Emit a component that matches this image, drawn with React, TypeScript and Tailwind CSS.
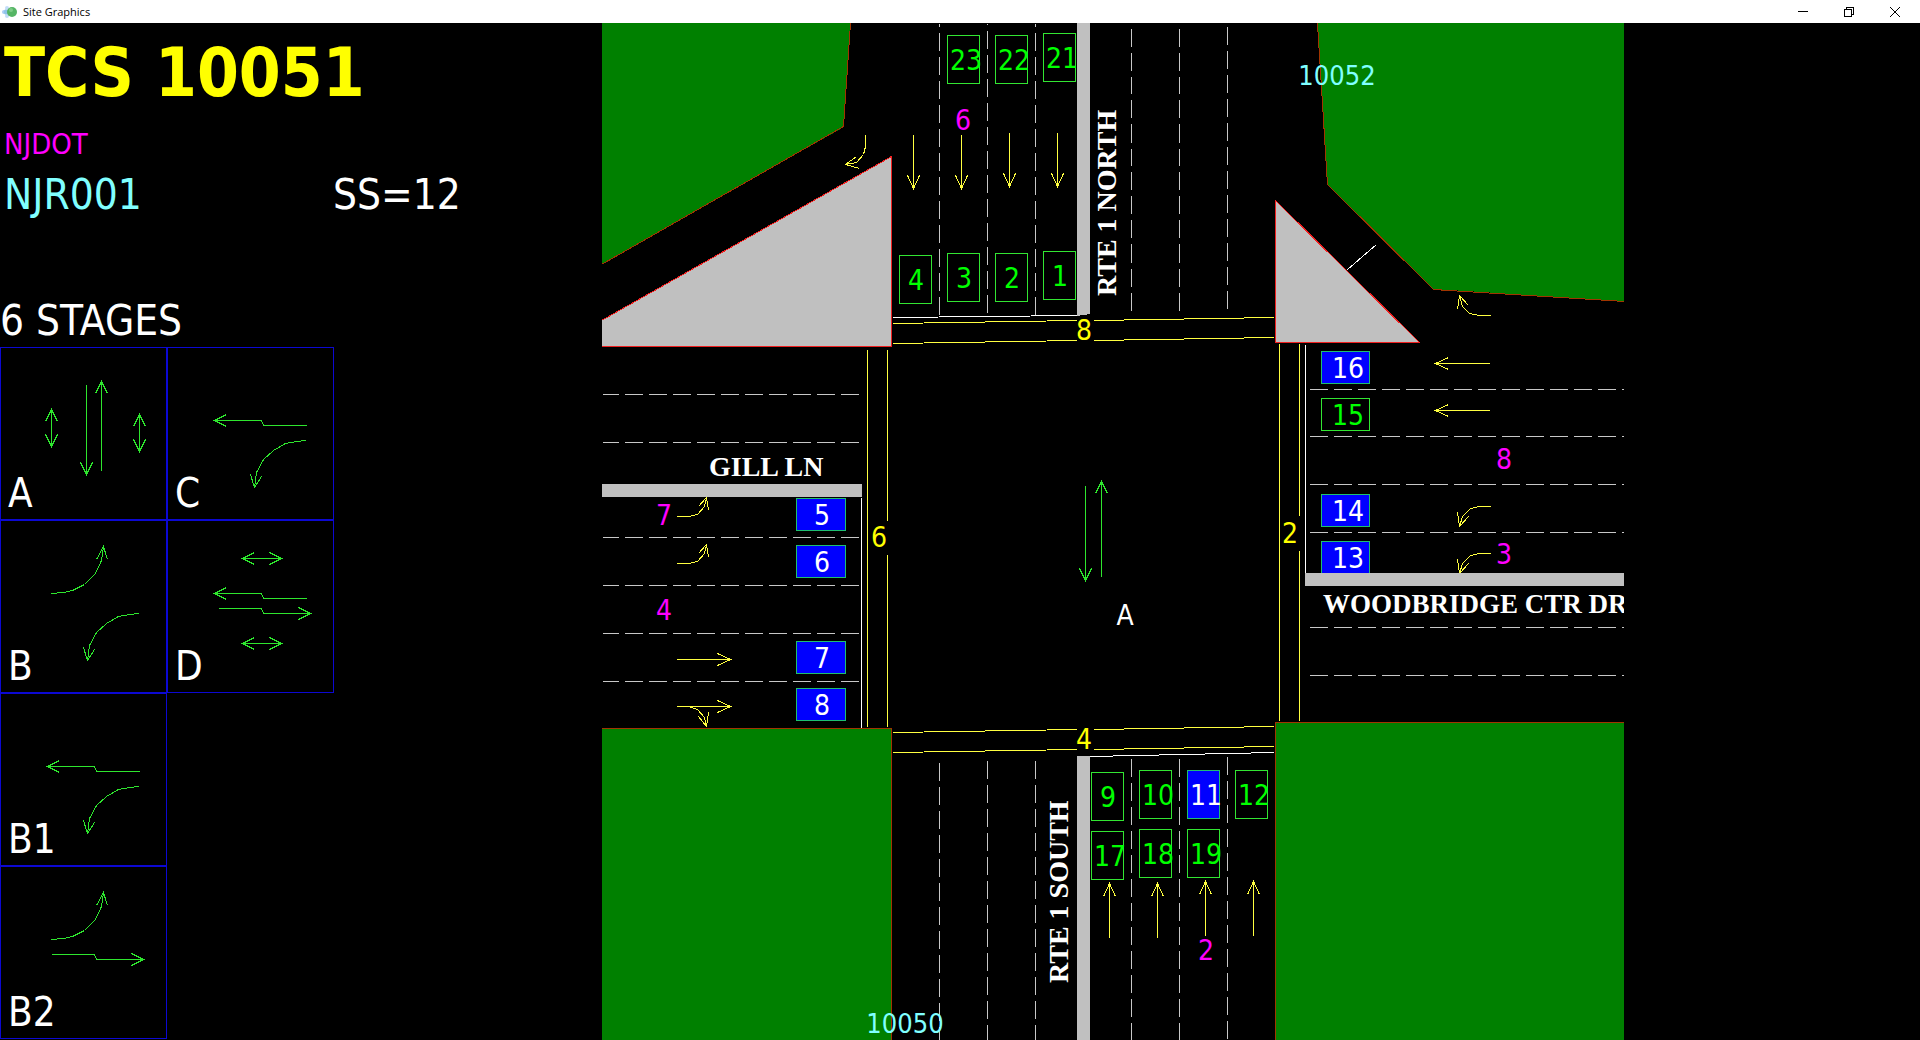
import React from "react";

type Point = [number, number];

const MAP_FONT = "font-['DejaVu_Sans_Condensed','DejaVu_Sans',sans-serif]";

/* Centres one-pixel strokes on the pixel grid. */
const PIXEL_CENTRE = "translate(0.5 0.5)";

const toPoints = (points: Point[]) => points.map((p) => p.join(",")).join(" ");

/* ---------- Arrows ---------- */

type Direction = "up" | "down" | "left" | "right";

function headPoints(x: number, y: number, dir: Direction, len: number): string {
  const w = 6;
  switch (dir) {
    case "up":
      return toPoints([[x - w, y + len], [x, y], [x + w, y + len]]);
    case "down":
      return toPoints([[x - w, y - len], [x, y], [x + w, y - len]]);
    case "left":
      return toPoints([[x + len, y - w], [x, y], [x + len, y + w]]);
    default:
      return toPoints([[x - len, y - w], [x, y], [x - len, y + w]]);
  }
}

function Arrow({ from, to, dir, len = 13 }: { from: Point; to: Point; dir: Direction; len?: number }) {
  return (
    <g>
      <polyline points={toPoints([from, to])} />
      <polyline points={headPoints(to[0], to[1], dir, len)} />
    </g>
  );
}

function DoubleArrow({ from, to, vertical }: { from: Point; to: Point; vertical?: boolean }) {
  return (
    <g>
      <polyline points={toPoints([from, to])} />
      <polyline points={headPoints(from[0], from[1], vertical ? "up" : "left", 12)} />
      <polyline points={headPoints(to[0], to[1], vertical ? "down" : "right", 12)} />
    </g>
  );
}

/* ---------- Stage movements ---------- */

const LeftThrough = () => (
  <g>
    <polyline points="139,78 96,78 94,73 47,73" />
    <polyline points="59,67 47,73 59,79" />
  </g>
);

const RightThrough = () => (
  <g>
    <polyline points="51,88 94,88 96,93 143,93" />
    <polyline points="131,87 143,93 131,99" />
  </g>
);

const LeftTurnDown = () => (
  <g>
    <polyline points="139,93 129,94 118,96 106,103 96,112 89,125 87,140" />
    <polyline points="83,127 87,140 94,129" />
  </g>
);

const RightTurnUp = () => (
  <g>
    <polyline points="51,73 63,72 72,70 84,64 95,53 101,40 103,26" />
    <polyline points="96,39 103,26 107,39" />
  </g>
);

const STAGES: { name: string; column: string; moves: React.ReactNode }[] = [
  {
    name: "A",
    column: "col-start-1",
    moves: (
      <>
        <DoubleArrow from={[51, 62]} to={[51, 99]} vertical />
        <Arrow from={[86, 37]} to={[86, 127]} dir="down" len={12} />
        <Arrow from={[101, 123]} to={[101, 34]} dir="up" len={12} />
        <DoubleArrow from={[139, 67]} to={[139, 104]} vertical />
      </>
    ),
  },
  { name: "C", column: "col-start-2", moves: <><LeftThrough /><LeftTurnDown /></> },
  { name: "B", column: "col-start-1", moves: <><RightTurnUp /><LeftTurnDown /></> },
  {
    name: "D",
    column: "col-start-2",
    moves: (
      <>
        <DoubleArrow from={[75, 38]} to={[114, 38]} />
        <LeftThrough />
        <RightThrough />
        <DoubleArrow from={[75, 123]} to={[114, 123]} />
      </>
    ),
  },
  { name: "B1", column: "col-start-1", moves: <><LeftThrough /><LeftTurnDown /></> },
  { name: "B2", column: "col-start-1", moves: <><RightTurnUp /><RightThrough /></> },
];

function StageGrid() {
  return (
    <ul className="grid w-max grid-cols-[167px_167px]">
      {STAGES.map((s) => (
        <li key={s.name} className={`relative h-[173px] border border-[#0c08d2] ${s.column}`}>
          <svg viewBox="1 1 165 171" className="size-full fill-none stroke-[#2ee62e]" shapeRendering="crispEdges" aria-hidden="true">
            <g transform={PIXEL_CENTRE}>{s.moves}</g>
          </svg>
          <span className="absolute bottom-[2px] left-[7px] text-[40px] leading-[48px] text-white">{s.name}</span>
        </li>
      ))}
    </ul>
  );
}

/* ---------- Intersection ---------- */

type Detector = { id: number; x: number; y: number; wide?: boolean; active?: boolean };

const DETECTORS: Detector[] = [
  { id: 23, x: 947, y: 35 },
  { id: 22, x: 995, y: 35 },
  { id: 21, x: 1043, y: 33 },
  { id: 4, x: 899, y: 255 },
  { id: 3, x: 947, y: 253 },
  { id: 2, x: 995, y: 253 },
  { id: 1, x: 1043, y: 251 },
  { id: 5, x: 796, y: 498, wide: true, active: true },
  { id: 6, x: 796, y: 545, wide: true, active: true },
  { id: 7, x: 796, y: 641, wide: true, active: true },
  { id: 8, x: 796, y: 688, wide: true, active: true },
  { id: 16, x: 1321, y: 351, wide: true, active: true },
  { id: 15, x: 1321, y: 398, wide: true },
  { id: 14, x: 1321, y: 494, wide: true, active: true },
  { id: 13, x: 1321, y: 541, wide: true, active: true },
  { id: 9, x: 1091, y: 772 },
  { id: 10, x: 1139, y: 770 },
  { id: 11, x: 1187, y: 770, active: true },
  { id: 12, x: 1235, y: 770 },
  { id: 17, x: 1091, y: 831 },
  { id: 18, x: 1139, y: 829 },
  { id: 19, x: 1187, y: 829 },
];

/* Each lane line is drawn from its first dash to its far end. */
const LANES: [Point, Point][] = [
  [[939, 314], [939, 23]],
  [[987, 312], [987, 23]],
  [[1035, 314], [1035, 23]],
  [[1131, 28], [1131, 311]],
  [[1179, 28], [1179, 311]],
  [[1227, 26], [1227, 308]],
  [[939, 762], [939, 1040]],
  [[987, 760], [987, 1040]],
  [[1035, 760], [1035, 1040]],
  [[1131, 758], [1131, 1040]],
  [[1179, 758], [1179, 1040]],
  [[1227, 756], [1227, 1040]],
  ...[394, 442, 537, 585, 633, 681].map((y): [Point, Point] => [[858, y], [602, y]]),
  ...[389, 436, 484, 532, 627, 675].map((y): [Point, Point] => [[1309, y], [1624, y]]),
];

const PHASES: [string, number, number][] = [
  ["6", 963, 130],
  ["7", 664, 525],
  ["4", 664, 620],
  ["8", 1504, 469],
  ["3", 1504, 564],
  ["2", 1206, 960],
];

const CROSSWALKS: [string, number, number][] = [
  ["8", 1084, 340],
  ["6", 879, 547],
  ["2", 1290, 543],
  ["4", 1084, 749],
];

const EASTBOUND_LEFT: Point[] = [[676, 516], [688, 516], [697, 514], [704, 506], [706, 497]];
const WESTBOUND_LEFT: Point[] = [[1490, 506], [1479, 506], [1470, 508], [1462, 516], [1459, 526]];

const shift = (points: Point[], dy: number): Point[] => points.map(([x, y]) => [x, y + dy]);

function DetectorBox({ id, x, y, wide, active }: Detector) {
  const w = wide ? (id < 10 ? 49 : 48) : 32;
  const h = wide ? 32 : 48;
  return (
    <g>
      <rect
        x={x}
        y={y}
        width={w}
        height={h}
        transform={PIXEL_CENTRE}
        shapeRendering="crispEdges"
        className={active ? "fill-[#0000ff] stroke-[#1fbf70]" : "fill-none stroke-[#32e632]"}
      />
      <text x={x + Math.round(w / 2) + (id > 9 ? 3 : 1)} y={y + h / 2 + 11} className={active ? "fill-white" : "fill-[#00ff00]"}>
        {id}
      </text>
    </g>
  );
}

function Intersection() {
  return (
    <svg viewBox="602 23 1022 1017" className={`block w-full text-[28px] ${MAP_FONT}`} role="img" aria-label="Intersection of RTE 1, GILL LN and WOODBRIDGE CTR DR">
      <g shapeRendering="crispEdges">
        <g transform={PIXEL_CENTRE} className="fill-none stroke-[#c8c8c8]" strokeDasharray="18 6">
          {LANES.map(([a, b], i) => (
            <line key={i} x1={a[0]} y1={a[1]} x2={b[0]} y2={b[1]} />
          ))}
        </g>

        <g className="fill-[#008000]">
          <polygon points="602,23 850,23 844,127 602,264" />
          <polygon points="1317,23 1328,185 1434,289 1624,301 1624,23" />
          <rect x="602" y="728" width="289" height="312" />
          <rect x="1275" y="722" width="349" height="318" />
        </g>
        <g transform={PIXEL_CENTRE} className="fill-none stroke-[#a03400]">
          <polyline points="850,23 843,126 601,264" />
          <polyline points="1317,23 1327,184 1433,289 1624,301" />
          <polyline points="601,728 891,728 891,1040" />
          <polyline points="1275,1040 1275,722 1624,722" />
        </g>
        <g transform={PIXEL_CENTRE} className="fill-[#c0c0c0] stroke-[#f02020]">
          <polygon points="601,320 891,156 891,346 601,346" />
          <polygon points="1275,200 1419,342 1275,342" />
        </g>
        <g className="fill-[#c0c0c0]">
          <polygon points="1077,23 1090,23 1090,314 1077,316" />
          <rect x="1077" y="756" width="13" height="284" />
          <rect x="602" y="484" width="260" height="13" />
        </g>

        <g transform={PIXEL_CENTRE} className="fill-none stroke-white">
          <line x1="893" y1="317" x2="1077" y2="315" />
          <line x1="861" y1="497" x2="861" y2="727" />
          <line x1="1305" y1="344" x2="1305" y2="573" />
          <line x1="1090" y1="756" x2="1274" y2="752" />
          <line x1="1347" y1="269" x2="1376" y2="244" />
        </g>

        <g transform={PIXEL_CENTRE} className="fill-none stroke-[#ffff40]">
          <path d="M893,323L1077,320M1094,320L1274,317" />
          <path d="M893,343L1077,340M1094,340L1274,337" />
          <path d="M893,732L1077,729M1094,729L1274,726" />
          <path d="M893,752L1077,749M1094,749L1274,746" />
          <path d="M867,349V726M887,349V520M887,554V726" />
          <path d="M1279,343V720M1299,343V515M1299,550V720" />

          <Arrow from={[913, 134]} to={[913, 188]} dir="down" />
          <Arrow from={[961, 134]} to={[961, 188]} dir="down" />
          <Arrow from={[1009, 132]} to={[1009, 186]} dir="down" />
          <Arrow from={[1057, 132]} to={[1057, 186]} dir="down" />
          <Arrow from={[1109, 937]} to={[1109, 883]} dir="up" />
          <Arrow from={[1157, 937]} to={[1157, 883]} dir="up" />
          <Arrow from={[1205, 935]} to={[1205, 881]} dir="up" />
          <Arrow from={[1253, 935]} to={[1253, 881]} dir="up" />
          <Arrow from={[676, 659]} to={[730, 659]} dir="right" />
          <Arrow from={[676, 706]} to={[730, 706]} dir="right" />
          <Arrow from={[1489, 363]} to={[1435, 363]} dir="left" />
          <Arrow from={[1489, 410]} to={[1435, 410]} dir="left" />

          <polyline points="865,134 865,146 863,154 856,162 845,164" />
          <polyline points="856,156 845,164 859,168" />
          <polyline points="1490,315 1479,315 1469,313 1462,306 1459,295" />
          <polyline points="1457,309 1459,295 1468,305" />
          <polyline points="688,706 697,709 704,717 706,726" />
          <polyline points="698,716 706,726 708,712" />
          {[0, 47].map((dy) => (
            <g key={dy}>
              <polyline points={toPoints(shift(EASTBOUND_LEFT, dy))} />
              <polyline points={toPoints(shift([[698, 506], [706, 497], [708, 510]], dy))} />
              <polyline points={toPoints(shift(WESTBOUND_LEFT, dy))} />
              <polyline points={toPoints(shift([[1457, 512], [1459, 526], [1468, 516]], dy))} />
            </g>
          ))}
        </g>

        <g transform={PIXEL_CENTRE} className="fill-none stroke-[#2ee62e]">
          <Arrow from={[1085, 485]} to={[1085, 580]} dir="down" len={12} />
          <Arrow from={[1101, 576]} to={[1101, 481]} dir="up" len={12} />
        </g>
      </g>

      <g textAnchor="middle">
        {DETECTORS.map((d) => (
          <DetectorBox key={d.id} {...d} />
        ))}
        <g className="fill-[#ff00ff]">
          {PHASES.map(([label, x, y]) => (
            <text key={label} x={x} y={y}>{label}</text>
          ))}
        </g>
        <g className="fill-[#ffff00]">
          {CROSSWALKS.map(([label, x, y]) => (
            <text key={label} x={x} y={y}>{label}</text>
          ))}
        </g>
        <g className="fill-[#80ffff] text-[27px]">
          <text x="1337" y="85">10052</text>
          <text x="905" y="1033">10050</text>
        </g>
        <text x="1125" y="625" className="fill-white">A</text>
      </g>

      <rect x="1305" y="573" width="319" height="13" className="fill-[#c0c0c0]" />

      <g className="fill-white font-['Liberation_Serif',serif] font-bold">
        <text x="709" y="476">GILL LN</text>
        <text x="1323" y="613" className="text-[27px]">WOODBRIDGE CTR DR</text>
        <text transform="translate(1116 296) rotate(-90)">RTE 1 NORTH</text>
        <text transform="translate(1068 983) rotate(-90)">RTE 1 SOUTH</text>
      </g>
    </svg>
  );
}

/* ---------- Window ---------- */

function TitleBar() {
  const button = "flex h-full w-[46px] items-center justify-center hover:bg-gray-200";
  return (
    <header className="flex h-[23px] items-center bg-white px-[2px] text-black">
      <svg width="16" height="16" viewBox="0 0 16 16" aria-hidden="true">
        <circle cx="2" cy="8" r="2" className="fill-[#a9cdf5]" />
        <circle cx="5" cy="8" r="3" className="fill-[#8fc3e8]" />
        <circle cx="5" cy="4" r="2" className="fill-[#c3dcf8]" />
        <circle cx="5" cy="12" r="2" className="fill-[#c3dcf8]" />
        <circle cx="10" cy="8" r="5" className="fill-[#55b565]" />
        <circle cx="9" cy="6" r="2" className="fill-[#7dcb86]" />
      </svg>
      <span className="ml-[5px] flex-1 font-['Open_Sans',sans-serif] text-[11px] leading-4">Site Graphics</span>
      <button type="button" aria-label="Minimize" className={button}>
        <svg width="10" height="10" viewBox="0 0 10 10" className="fill-none stroke-black" shapeRendering="crispEdges">
          <path d="M0 4.500H10" />
        </svg>
      </button>
      <button type="button" aria-label="Restore" className={button}>
        <svg width="10" height="10" viewBox="0 0 10 10" className="fill-none stroke-black" shapeRendering="crispEdges">
          <path d="M.5 2.500H7.500V9.500H.5ZM2.500 2.500V.5H9.500V7.500H7.500" />
        </svg>
      </button>
      <button type="button" aria-label="Close" className={button}>
        <svg width="10" height="10" viewBox="0 0 10 10" className="fill-none stroke-black">
          <path d="M0 0L10 10M10 0L0 10" />
        </svg>
      </button>
    </header>
  );
}

export default function App() {
  return (
    <div className="min-h-screen overflow-hidden bg-black">
      <TitleBar />
      <main className="grid grid-cols-[602fr_1022fr_296fr]">
        <section className={`whitespace-nowrap ${MAP_FONT}`}>
          <h1 className="pl-1 text-[67px] font-bold leading-[100px] text-[#ffff00]">TCS 10051</h1>
          <p className="pl-1 text-[29px] leading-[42px] text-[#ff00ff]">NJDOT</p>
          <div className="flex pl-1 text-[42px] leading-[60px]">
            <span className="w-[329px] text-[#80ffff]">NJR001</span>
            <span className="text-white">SS=12</span>
          </div>
          <h2 className="mt-[70px] text-[42px] leading-[52px] text-white">6 STAGES</h2>
          <StageGrid />
        </section>
        <Intersection />
      </main>
    </div>
  );
}
